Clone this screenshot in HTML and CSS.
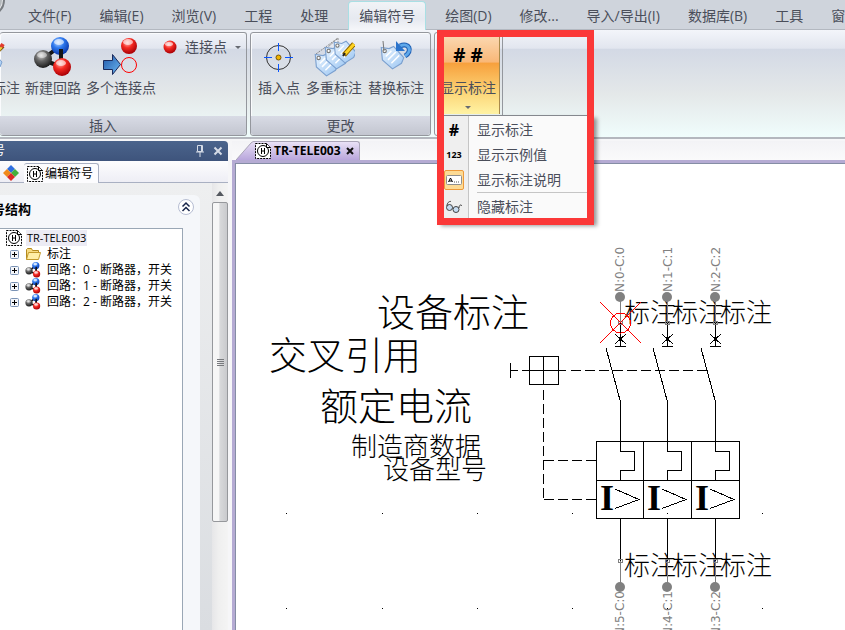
FILE: index.html
```html
<!DOCTYPE html>
<html lang="zh-CN">
<head>
    <meta charset="UTF-8">
    <meta name="viewport" content="width=device-width, initial-scale=1.0">
    <title>编辑符号 - TR-TELE003</title>
    <link rel="stylesheet" href="styles.css">
</head>
<body>
    <!-- shared icons -->
    <svg class="defs" width="0" height="0" aria-hidden="true">
        <defs>
            <radialGradient id="red" cx="40%" cy="30%" r="70%">
                <stop offset="0" stop-color="#ffb9b4"/>
                <stop offset="0.45" stop-color="#f52a22"/>
                <stop offset="1" stop-color="#a80006"/>
            </radialGradient>
            <radialGradient id="blue" cx="40%" cy="30%" r="70%">
                <stop offset="0" stop-color="#bcd8ff"/>
                <stop offset="0.45" stop-color="#2d78ee"/>
                <stop offset="1" stop-color="#0a36a8"/>
            </radialGradient>
            <radialGradient id="gray" cx="40%" cy="30%" r="70%">
                <stop offset="0" stop-color="#d8d8d8"/>
                <stop offset="0.45" stop-color="#666"/>
                <stop offset="1" stop-color="#1c1c1c"/>
            </radialGradient>
            <linearGradient id="tagfill" x1="0" y1="0" x2="1" y2="1">
                <stop offset="0" stop-color="#e9f4ff"/>
                <stop offset="1" stop-color="#9cc6f2"/>
            </linearGradient>
            <linearGradient id="arrow" x1="0" y1="0" x2="1" y2="1">
                <stop offset="0" stop-color="#1f56a8"/>
                <stop offset="1" stop-color="#6db8f2"/>
            </linearGradient>
        </defs>
        <symbol id="molecule" viewBox="0 0 40 40">
            <path d="M10 22L27 9M28 9v20M10 23l19 7" stroke="#151515" stroke-width="4"/>
            <circle cx="27" cy="9" r="9" fill="url(#blue)"/>
            <path d="M28 12v10" stroke="#151515" stroke-width="4"/>
            <circle cx="10" cy="22" r="9" fill="url(#gray)"/>
            <circle cx="29" cy="30" r="9" fill="url(#red)"/>
            <ellipse cx="26" cy="5" rx="5" ry="3" fill="#fff" opacity="0.6"/>
            <ellipse cx="9" cy="18" rx="5" ry="3" fill="#fff" opacity="0.45"/>
            <ellipse cx="28" cy="26" rx="5" ry="3" fill="#fff" opacity="0.6"/>
        </symbol>
        <symbol id="tag" viewBox="0 0 24 24">
            <path d="M2 4l7 1 4-2 9 10-2 5-8 5-9-8z" fill="url(#tagfill)" stroke="#7ba0cf"/>
            <path d="M6 12l5-5M8 15l7-7M11 18l7-7" stroke="#fff" stroke-width="1.3"/>
            <circle cx="5" cy="7" r="1.500" fill="#fff" stroke="#777"/>
        </symbol>
        <symbol id="symdoc" viewBox="0 0 16 16">
            <path d="M0.500 0.500h11l4 4v11h-15z" fill="#fff" stroke="#000" stroke-dasharray="2 1"/>
            <path d="M11.500 0.500v4h4" fill="none" stroke="#000"/>
            <circle cx="8" cy="8" r="5.500" fill="none" stroke="#000"/>
            <path d="M6.500 5v6M9.500 5v6M6.500 8h3" stroke="#000"/>
        </symbol>
        <symbol id="plus" viewBox="0 0 9 9">
            <rect x="0.500" y="0.500" width="8" height="8" rx="1" fill="#f4f6fa" stroke="#7b93b5"/>
            <path d="M2 4.500h5M4.500 2v5" stroke="#000"/>
        </symbol>
    </svg>

    <nav class="menubar">
        <svg class="orb" width="14" height="30" viewBox="0 0 14 30">
            <circle cx="-12" cy="0" r="16" fill="#e6e8ea" stroke="#777b80" stroke-width="2"/>
            <circle cx="-12" cy="0" r="13" fill="none" stroke="#b4b8bc" stroke-width="2"/>
        </svg>
        <a href="#">文件(F)</a>
        <a href="#">编辑(E)</a>
        <a href="#">浏览(V)</a>
        <a href="#">工程</a>
        <a href="#">处理</a>
        <a href="#" class="active">编辑符号</a>
        <a href="#">绘图(D)</a>
        <a href="#">修改...</a>
        <a href="#">导入/导出(I)</a>
        <a href="#">数据库(B)</a>
        <a href="#">工具</a>
        <a href="#">窗口(W)</a>
    </nav>

    <header class="ribbon">
        <section class="group insert">
            <div class="tools">
                <button class="tool">
                    <svg width="28" height="40" viewBox="12 0 28 40">
                        <use href="#tag" x="0" y="12" width="24" height="24"/>
                        <path d="M14 18l9-9" stroke="#7d5a10" stroke-width="4"/>
                        <path d="M14 18l8-8" stroke="#f3ce3a" stroke-width="2"/>
                        <path d="M21 10l2-3" stroke="#e23b2e" stroke-width="4"/>
                    </svg>
                    <span>标注</span>
                </button>
                <button class="tool">
                    <svg width="40" height="40"><use href="#molecule"/></svg>
                    <span>新建回路</span>
                </button>
                <button class="tool">
                    <svg width="40" height="40" viewBox="0 0 40 40">
                        <circle cx="28" cy="9" r="8" fill="url(#red)"/>
                        <ellipse cx="27" cy="5" rx="5" ry="3" fill="#fff" opacity="0.6"/>
                        <path d="M2.500 23.500h9v-6l8 10-8 10v-5h-9z" fill="url(#arrow)" stroke="#1b2a5c"/>
                        <circle cx="28" cy="28" r="7.500" fill="none" stroke="#f00"/>
                    </svg>
                    <span>多个连接点</span>
                </button>
                <button class="tool-small">
                    <svg width="14" height="14" viewBox="0 0 14 14">
                        <circle cx="7" cy="7" r="6.500" fill="url(#red)"/>
                        <ellipse cx="6" cy="4" rx="4" ry="2" fill="#fff" opacity="0.6"/>
                    </svg>
                    <span>连接点</span>
                    <i class="caret"></i>
                </button>
            </div>
            <h2>插入</h2>
        </section>

        <section class="group change">
            <div class="tools">
                <button class="tool">
                    <svg width="40" height="40" viewBox="0 0 40 40">
                        <circle cx="19.500" cy="20.500" r="12" fill="none" stroke="#333"/>
                        <path d="M19.500 6v8M19.500 27v8M5 20.500h8M26 20.500h8" stroke="#0a55ff"/>
                        <circle cx="19.500" cy="20.500" r="2.500" fill="#f0b400" stroke="#7d5500"/>
                    </svg>
                    <span>插入点</span>
                </button>
                <button class="tool">
                    <svg width="42" height="40" viewBox="0 0 42 40">
                        <path d="M3 17L25 1M14 11l11-10v6" fill="none" stroke="#888" stroke-dasharray="2 1"/>
                        <use href="#tag" x="0" y="13" width="27" height="27"/>
                        <use href="#tag" x="10" y="6" width="27" height="27"/>
                        <use href="#tag" x="19" y="1" width="26" height="26"/>
                        <path d="M31 18l10-11" stroke="#8a6500" stroke-width="5"/>
                        <path d="M32 17l9-10" stroke="#ffd21f" stroke-width="3"/>
                        <path d="M30 19l2-3" stroke="#222" stroke-width="2"/>
                    </svg>
                    <span>多重标注</span>
                </button>
                <button class="tool">
                    <svg width="40" height="40" viewBox="0 0 40 40">
                        <use href="#tag" x="3" y="6" width="27" height="27"/>
                        <path d="M8 14L7 4" fill="none" stroke="#777"/>
                        <path d="M24 9c9-4 13 5 5 10" fill="none" stroke="#1e5fb4" stroke-width="5"/>
                        <path d="M24 9c9-4 13 5 5 10" fill="none" stroke="#5fa8ea" stroke-width="3"/>
                        <path d="M20 4v10h9z" fill="#2b74cc"/>
                    </svg>
                    <span>替换标注</span>
                </button>
            </div>
            <h2>更改</h2>
        </section>

        <section class="group show">
            <button class="tool pressed" aria-haspopup="menu" aria-expanded="true">
                <b class="hashes"># #</b>
                <span>显示标注</span>
                <i class="caret"></i>
            </button>
            <div class="dropdown" role="menu">
                <button role="menuitem"><b class="mi hash">#</b><span>显示标注</span></button>
                <button role="menuitem"><b class="mi num">123</b><span>显示示例值</span></button>
                <button role="menuitem">
                    <b class="mi checked">
                        <svg width="16" height="10" viewBox="0 0 16 10">
                            <rect x="0.500" y="0.500" width="15" height="9" rx="1" fill="#fff" stroke="#8f8f8f"/>
                            <path d="M2.500 7l2-4 2 4M3 6h3" fill="none" stroke="#000"/>
                            <path d="M8 7h5" stroke="#555" stroke-dasharray="1 1"/>
                        </svg>
                    </b>
                    <span>显示标注说明</span>
                </button>
                <hr>
                <button role="menuitem">
                    <b class="mi">
                        <svg width="16" height="14" viewBox="0 0 16 14">
                            <circle cx="3.500" cy="7.500" r="3" fill="#c5dcf2" stroke="#444"/>
                            <circle cx="10" cy="9.500" r="3" fill="#c5dcf2" stroke="#444"/>
                            <path d="M1 6C1 3 3 1 5 1.500M6.500 8l1 0.500M13 8c0-3 2-4 3-2" fill="none" stroke="#444"/>
                        </svg>
                    </b>
                    <span>隐藏标注</span>
                </button>
            </div>
            <div class="highlight"></div>
        </section>
    </header>

    <main>
        <aside class="side">
            <div class="side-title">
                <span>编辑符号</span>
                <button aria-label="固定">
                    <svg width="10" height="12" viewBox="0 0 10 12"><path d="M2.500 0.500h5v6h-5zM6.500 1v5M1 7h8M5 7v5" fill="none" stroke="#d5dbe6"/></svg>
                </button>
                <button aria-label="关闭">
                    <svg width="10" height="10" viewBox="0 0 10 10"><path d="M1.500 1.500l7 7M8.500 1.500l-7 7" stroke="#d5dbe6" stroke-width="2"/></svg>
                </button>
            </div>
            <div class="side-tabs">
                <button class="side-tab" aria-label="组件">
                    <svg width="18" height="18" viewBox="0 0 18 18">
                        <path d="M9 1l4 4-4 4-4-4z" fill="#2f6fe0"/>
                        <path d="M5 5l4 4-4 4-4-4z" fill="#f08a1c"/>
                        <path d="M13 5l4 4-4 4-4-4z" fill="#44b03c"/>
                        <path d="M9 9l4 4-4 4-4-4z" fill="#dc2a24"/>
                    </svg>
                </button>
                <button class="side-tab active">
                    <svg width="16" height="16"><use href="#symdoc"/></svg>
                    <span>编辑符号</span>
                </button>
            </div>
            <div class="side-body">
                <div class="cards">
                    <section class="card">
                        <div class="card-head">
                            <h3>符号结构</h3>
                            <button aria-label="折叠">
                                <svg width="16" height="16" viewBox="0 0 16 16">
                                    <circle cx="8" cy="8" r="7.500" fill="#fff" stroke="#b6bdd2"/>
                                    <path d="M4.500 7.500L8 4l3.500 3.500M4.500 12L8 8.500l3.500 3.500" fill="none" stroke="#17254a" stroke-width="1.500"/>
                                </svg>
                            </button>
                        </div>
                        <ul class="tree">
                            <li class="root"><svg width="16" height="16"><use href="#symdoc"/></svg><span>TR-TELE003</span></li>
                            <li>
                                <svg width="9" height="9"><use href="#plus"/></svg>
                                <svg width="16" height="14" viewBox="0 0 16 14"><path d="M1.500 12.500v-10l1-1h4l1 2h6v2" fill="#f8dc82" stroke="#b48a1e"/><path d="M1.500 12.500l2-7h12l-2 7z" fill="#ffeea6" stroke="#c39a2c"/></svg>
                                <span>标注</span>
                            </li>
                            <li><svg width="9" height="9"><use href="#plus"/></svg><svg width="16" height="16"><use href="#molecule"/></svg><span>回路：0 - 断路器，开关</span></li>
                            <li><svg width="9" height="9"><use href="#plus"/></svg><svg width="16" height="16"><use href="#molecule"/></svg><span>回路：1 - 断路器，开关</span></li>
                            <li><svg width="9" height="9"><use href="#plus"/></svg><svg width="16" height="16"><use href="#molecule"/></svg><span>回路：2 - 断路器，开关</span></li>
                        </ul>
                    </section>
                </div>
                <div class="scrollbar">
                    <i class="up"></i>
                    <div class="thumb"><i class="grip"></i></div>
                </div>
            </div>
        </aside>

        <section class="editor">
            <div class="doc-tabs">
                <svg class="slope" width="19" height="19" viewBox="0 0 19 19">
                    <defs><linearGradient id="slope" x1="0" y1="0" x2="0" y2="1"><stop offset="0" stop-color="#e9e1f6"/><stop offset="1" stop-color="#b9a6dc"/></linearGradient></defs>
                    <path d="M0 19L15 2q2-2 4-2v19z" fill="url(#slope)"/>
                    <path d="M0 19L15 2q2-2 4-1.500" fill="none" stroke="#aaa5b8"/>
                </svg>
                <div class="doc-tab">
                    <svg width="16" height="16"><use href="#symdoc"/></svg>
                    <span>TR-TELE003</span>
                    <button aria-label="关闭">
                        <svg width="8" height="8" viewBox="0 0 8 8"><path d="M1 1l6 6M7 1L1 7" stroke="#111" stroke-width="2"/></svg>
                    </button>
                </div>
            </div>
            <div class="canvas">
                <svg width="100%" height="100%">
                    <defs>
                        <!-- one breaker pole, x = 0 is the conductor -->
                        <g id="pole">
                            <path class="gray" d="M0.500 133v26M0.500 397v26"/>
                            <path d="M0.500 159v24M-5 182.500H6M-5 170l11 10M6 170l-11 10"/>
                            <path d="M-14 184L0.500 238V287.500H14.500V306.500H0.500V316"/>
                            <path d="M0.500 354v43"/>
                            <path d="M-5 325l24 10.500-24 9"/>
                            <circle class="node" cx="0" cy="133" r="5"/>
                            <circle class="node" cx="0" cy="423" r="5"/>
                            <circle class="gray" cx="0.500" cy="159" r="2"/>
                            <circle class="gray" cx="0.500" cy="397" r="2"/>
                        </g>
                    </defs>

                    <g class="labels">
                        <text class="big" x="141" y="162">设备标注</text>
                        <text class="big" x="33" y="205">交叉引用</text>
                        <text class="big" x="84" y="256">额定电流</text>
                        <text class="mid" x="115" y="292">制造商数据</text>
                        <text class="mid" x="147" y="315">设备型号</text>
                        <text class="mid" x="388" y="158">标注</text>
                        <text class="mid" x="436" y="158">标注</text>
                        <text class="mid" x="484" y="158">标注</text>
                        <text class="mid" x="388" y="411">标注</text>
                        <text class="mid" x="436" y="411">标注</text>
                        <text class="mid" x="484" y="411">标注</text>
                    </g>

                    <g class="wires">
                        <use href="#pole" x="384"/>
                        <use href="#pole" x="431"/>
                        <use href="#pole" x="479"/>
                        <path d="M360.500 277.500h143v77h-143zM407.500 277v77M455.500 277v77M360 316.500h143"/>
                        <path d="M274.500 199v15M293.500 192.500h29v28h-29zM307.500 192v29"/>
                        <path d="M275 206.500h7M286 206.500h44"/>
                        <path stroke-dasharray="10 4" d="M335 206.500h137M307.500 226v109M308 296.500h52M308 335.500h52"/>
                    </g>

                    <g class="trip">
                        <text x="364" y="346">I</text>
                        <text x="411" y="346">I</text>
                        <text x="459" y="346">I</text>
                    </g>

                    <g class="origin">
                        <circle cx="384.500" cy="159" r="10"/>
                        <path d="M364 138l41 41M405 138l-41 41"/>
                    </g>

                    <g class="nets">
                        <text transform="translate(388 128) rotate(-90)">N:0-C:0</text>
                        <text transform="translate(436 128) rotate(-90)">N:1-C:1</text>
                        <text transform="translate(484 128) rotate(-90)">N:2-C:2</text>
                        <text class="end" transform="translate(388 427) rotate(-90)">N:5-C:0</text>
                        <text class="end" transform="translate(436 427) rotate(-90)">N:4-C:1</text>
                        <text class="end" transform="translate(484 427) rotate(-90)">N:3-C:2</text>
                    </g>

                    <path class="grid" d="M50 349.500h1M146 349.500h1M241 349.500h1M336 349.500h1M431 349.500h1M526 349.500h1M50 444.500h1M146 444.500h1M241 444.500h1M336 444.500h1M431 444.500h1M526 444.500h1"/>
                </svg>
            </div>
        </section>
    </main>
</body>
</html>
```
FILE: styles.css
```css
* {
    box-sizing: border-box;
}

body {
    margin: 0;
    height: 100vh;
    display: flex;
    flex-direction: column;
    overflow: hidden;
    background: #f6f6f8;
    color: #4a4e5a;
    font-family: "Open Sans", "Noto Sans CJK SC", sans-serif;
    font-size: 14px;
    line-height: 20px;
}

button {
    margin: 0;
    padding: 0;
    border: 0;
    background: none;
    color: inherit;
    font: inherit;
}

svg {
    display: block;
    flex: none;
}

h2, h3, ul {
    margin: 0;
    padding: 0;
    font-weight: normal;
}

.defs {
    position: absolute;
}

/* menu bar */
.menubar {
    display: flex;
    flex: none;
    height: 30px;
    overflow: hidden;
    background: #cfd4dc;
    box-shadow: inset 0 -1px #b3b8c0;
}

.menubar a {
    flex: none;
    padding: 6px 14px 0;
    color: #4a4e5a;
    text-decoration: none;
    white-space: nowrap;
}

.menubar .active {
    margin: 1px 5px 0 6px;
    padding: 4px 10px 0;
    border: 1px solid #a9dfe4;
    border-bottom: 0;
    border-radius: 4px 4px 0 0;
    background: linear-gradient(#f1f3f6, #e6e9f0 60%, #f5f6f9);
}

/* ribbon */
.ribbon {
    display: flex;
    flex: none;
    gap: 3px;
    height: 109px;
    padding: 2px 0 3px;
    border-bottom: 2px solid #b4b7be;
    background: linear-gradient(#f3f5fa, #e2e6ef 17%, #d3d9e5 18%, #e4e8e9 60%, #f0fdfc);
    white-space: nowrap;
}

.group {
    display: flex;
    flex-direction: column;
    flex: none;
    height: 104px;
    border: 1px solid #94979d;
    border-radius: 3px;
    box-shadow: inset 1px 1px #fafbfd;
}

.group h2 {
    height: 19px;
    border-radius: 0 0 3px 3px;
    background: linear-gradient(#d8dbe5, #c3c6d0);
    font-size: 14px;
    line-height: 20px;
    text-align: center;
}

.insert {
    width: 247px;
    border-left: 0;
    overflow: hidden;
}

.insert h2 {
    padding-right: 40px;
}

.tools {
    display: flex;
    flex: 1;
    gap: 5px;
    justify-content: flex-end;
    padding: 4px 5px 0;
}

.change .tools {
    gap: 6px;
    padding: 4px 6px 0 7px;
}

.tool {
    display: flex;
    flex-direction: column;
    align-items: center;
}

.tool span {
    margin-top: 1px;
}

.tool-small {
    display: flex;
    align-items: center;
    gap: 8px;
    height: 20px;
    margin-left: 2px;
}

.caret {
    border: 3px solid transparent;
    border-top-color: #666a72;
    border-bottom: 0;
}

.show {
    position: relative;
    width: 69px;
    padding: 0 2px;
}

.pressed {
    height: 81px;
    border-right: 1px solid #a98a4c;
    background: linear-gradient(#fbdcb8, #f9b777 36%, #f7a03c 37%, #fcd77a 75%, #fff3a4);
}

.hashes {
    display: block;
    height: 41px;
    padding-top: 10px;
    color: #000;
    font-family: "Open Sans", sans-serif;
    font-size: 19px;
    line-height: 24px;
}

.pressed span {
    margin-top: 4px;
}

.pressed .caret {
    margin-top: 8px;
}

.dropdown {
    position: absolute;
    z-index: 1;
    top: 82px;
    left: 3px;
    width: 156px;
    padding: 1px 6px 4px;
    border-top: 1px solid #85888e;
    background: linear-gradient(90deg, #efefef 30px, #c5c5c5 30px, #c5c5c5 31px, #fafafa 31px);
    box-shadow: 3px 3px 4px rgba(0, 0, 0, 0.4);
}

.dropdown button {
    display: flex;
    align-items: center;
    gap: 13px;
    width: 100%;
    height: 25px;
}

.dropdown hr {
    height: 1px;
    margin: 0 0 1px 33px;
    border: 0;
    background: #c5c5c5;
}

.mi {
    display: flex;
    align-items: center;
    justify-content: center;
    width: 20px;
    height: 20px;
    color: #000;
}

.hash {
    font-size: 16px;
}

.num {
    font-size: 9px;
}

.checked {
    border: 1px solid #ee9a3a;
    border-radius: 2px;
    background: #fddb95;
}

.highlight {
    position: absolute;
    z-index: 2;
    top: -3px;
    left: 2px;
    width: 157px;
    height: 195px;
    border: 7px solid #fb3838;
    pointer-events: none;
}

/* work area */
main {
    display: flex;
    flex: 1;
    min-height: 0;
    padding-top: 2px;
}

.side {
    display: flex;
    flex-direction: column;
    flex: none;
    width: 280px;
    margin-left: -52px;
    color: #000;
    font-size: 12px;
    line-height: 16px;
}

.side-title {
    display: flex;
    align-items: center;
    gap: 8px;
    flex: none;
    height: 20px;
    padding: 0 5px 0 9px;
    border-radius: 0 4px 0 0;
    background: linear-gradient(#4b648c, #3e547c);
    color: #fff;
}

.side-title span {
    flex: 1;
}

.side-tabs {
    display: flex;
    flex: none;
    height: 22px;
    padding: 2px 0 0 52px;
    border-bottom: 1px solid #a9b0c2;
    background: linear-gradient(#fdfdfe, #eeeef5);
}

.side-tab {
    display: flex;
    align-items: center;
    gap: 2px;
    padding: 0 4px 0 2px;
}

.side-tab.active {
    height: 20px;
    padding: 0 5px 0 3px;
    border: 1px solid #a9b0c2;
    border-bottom: 0;
    border-left: 0;
    border-radius: 3px 3px 0 0;
    background: #fcfcfe;
}

.side-body {
    display: flex;
    flex: 1;
    min-height: 0;
}

.cards {
    display: flex;
    flex: 1;
    padding: 12px 12px 0 20px;
    background: linear-gradient(#eeeff0, #dadde1);
}

.card {
    display: flex;
    flex: 1;
    flex-direction: column;
    border-radius: 0 6px 0 0;
    background: #f5f7fa;
}

.card-head {
    display: flex;
    align-items: center;
    justify-content: space-between;
    height: 33px;
    padding: 0 6px 10px 11px;
}

.card-head h3 {
    padding-top: 4px;
    font-size: 13px;
    font-weight: bold;
}

.tree {
    flex: 1;
    margin-right: 17px;
    padding: 1px 0 0 37px;
    border: 1px solid #9aa7b5;
    border-bottom: 0;
    background: #fff;
    list-style: none;
    white-space: nowrap;
}

.tree li {
    display: flex;
    align-items: center;
    gap: 6px;
    height: 16px;
    padding-left: 4px;
}

.tree .root {
    gap: 4px;
    padding-left: 0;
    font-size: 11px;
}

.root span {
    padding: 0 1px;
    background: #ecebf4;
}

.scrollbar {
    display: flex;
    flex-direction: column;
    align-items: center;
    width: 16px;
    padding-top: 8px;
    background: linear-gradient(90deg, #e6e6e8, #efefef 40%, #f4f4f4);
}

.up {
    border: 4px solid transparent;
    border-top: 0;
    border-bottom: 5px solid #555960;
}

.thumb {
    display: flex;
    align-items: center;
    justify-content: center;
    width: 16px;
    height: 73%;
    margin-top: 6px;
    border: 1px solid #96989c;
    border-radius: 2px;
    background: linear-gradient(90deg, #f6f6f6 40%, #d8d9db 50%, #c9cacd);
}

.grip {
    width: 7px;
    height: 7px;
    background: repeating-linear-gradient(#77797d 0 1px, transparent 1px 2px);
}

.editor {
    display: flex;
    flex: 1;
    flex-direction: column;
    min-width: 0;
    margin-left: 4px;
}

.doc-tabs {
    display: flex;
    align-items: flex-end;
    flex: none;
    height: 19px;
    padding-left: 4px;
    background: linear-gradient(#f3f3f6, #fafafb);
}

.doc-tab {
    display: flex;
    align-items: center;
    gap: 3px;
    height: 19px;
    padding-right: 5px;
    border: 1px solid #aaa5b8;
    border-bottom: 0;
    border-left: 0;
    border-radius: 0 3px 0 0;
    background: linear-gradient(#e9e1f6, #b9a6dc);
    color: #000;
    font-size: 12px;
    font-weight: bold;
    line-height: 16px;
}

.doc-tab button {
    margin-left: 2px;
}

.canvas {
    flex: 1;
    min-height: 0;
    padding: 1px 0 0 1px;
    border-top: 3px solid #b5abd3;
    border-left: 3px solid #b5abd3;
    background: #fff;
    box-shadow: inset 1px 1px #858da5;
}

/* drawing */
.canvas text {
    fill: #000;
}

.labels {
    font-family: "Noto Sans CJK SC", sans-serif;
    font-weight: 300;
}

.big {
    font-size: 38px;
}

.mid {
    font-size: 26px;
}

.wires, .origin {
    fill: none;
    stroke: #000;
    shape-rendering: crispEdges;
}

.gray {
    stroke: #808080;
}

.node {
    fill: #808080;
    stroke: none;
    shape-rendering: auto;
}

.canvas .nets text {
    fill: #808080;
}

.trip {
    font-family: "Liberation Serif", serif;
    font-size: 36px;
    font-weight: bold;
}

.origin {
    stroke: #f00;
}

.nets {
    font-family: "DejaVu Sans", sans-serif;
    font-size: 12px;
}

.end {
    text-anchor: end;
}

.grid {
    stroke: #000;
    shape-rendering: crispEdges;
}
```
